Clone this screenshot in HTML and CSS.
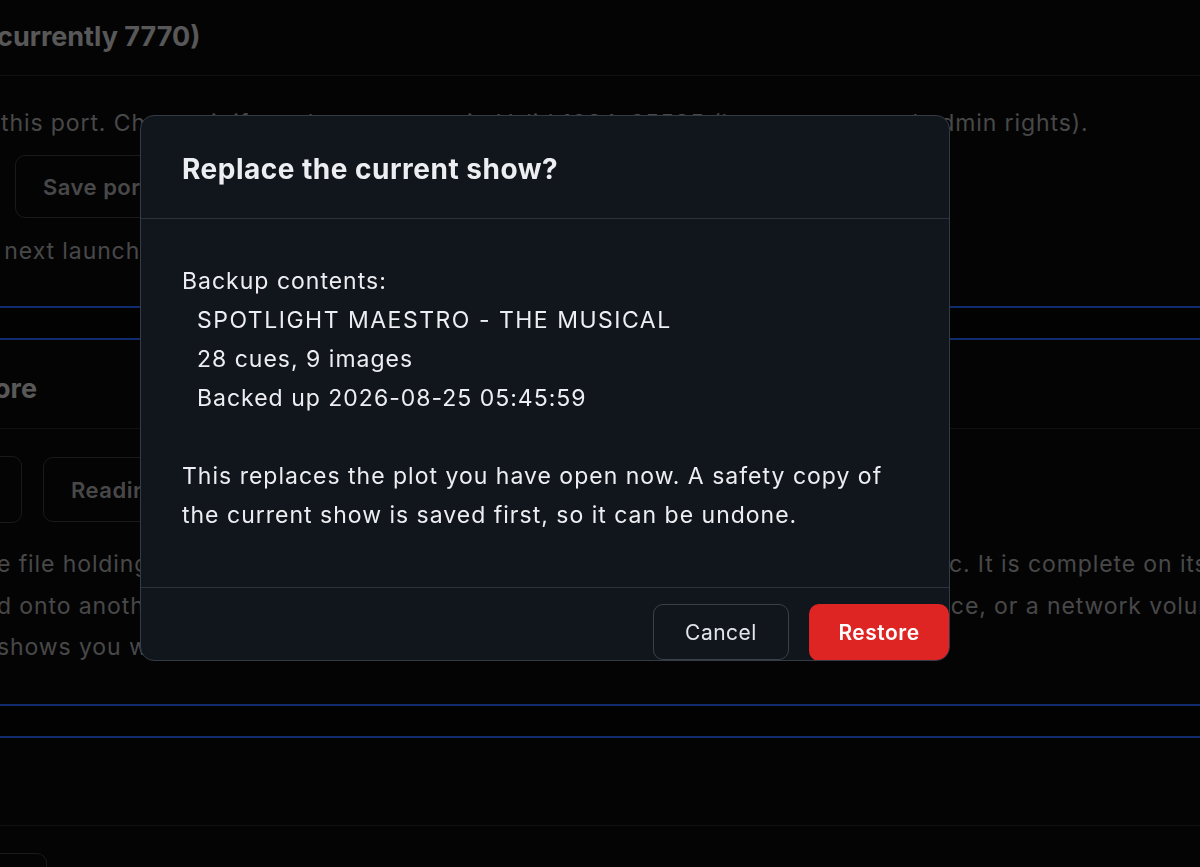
FILE: index.html
```html
<!DOCTYPE html>
<html lang="en">
<head>
<meta charset="utf-8">
<title>Replace the current show?</title>
<link rel="stylesheet" href="styles.css">
</head>
<body>
<main class="page">
  <section class="sec">
    <h2 class="heading">currently 7770)</h2>
    <div class="rule rule-a"></div>
    <p class="txt txt-a">this port. Change it if another app uses it. Valid 1024–65535 (lower ports need admin rights).</p>
    <button class="pbtn pbtn-save">Save port</button>
    <p class="txt txt-b">&nbsp;next launch.</p>
  </section>
  <div class="band band-a"></div>
  <section class="sec">
    <h2 class="heading heading-b">ore</h2>
    <div class="rule rule-b"></div>
    <div class="btnrow">
      <button class="pbtn pbtn-first">Back up</button>
      <button class="pbtn pbtn-read">Reading…</button>
    </div>
    <p class="txt txt-c">e file holding every cue, images and settings in the current show, in one place, etc. It is complete on its own<br>d onto another computer, a USB stick, a shared folder on another big trusted device, or a network volume<br>shows you what it contains before anything is replaced.</p>
  </section>
  <div class="band band-b"></div>
  <div class="rule rule-c"></div>
  <button class="pbtn pbtn-last">Open</button>
</main>

<div class="backdrop">
  <div class="dialog" role="dialog" aria-labelledby="dlg-title">
    <header class="dlg-head">
      <h1 id="dlg-title" class="dlg-title">Replace the current show?</h1>
    </header>
    <div class="dlg-body">
      <div class="line">Backup contents:</div>
      <div class="line indent caps">SPOTLIGHT MAESTRO - THE MUSICAL</div>
      <div class="line indent">28 cues, 9 images</div>
      <div class="line indent">Backed up 2026-08-25 05:45:59</div>
      <div class="line gap">This replaces the plot you have open now. A safety copy of</div>
      <div class="line">the current show is saved first, so it can be undone.</div>
    </div>
    <footer class="dlg-foot">
      <button class="btn btn-cancel">Cancel</button>
      <button class="btn btn-restore">Restore</button>
    </footer>
  </div>
</div>
</body>
</html>
```

FILE: styles.css
```css
html, body {
  margin: 0;
  padding: 0;
  width: 1200px;
  height: 867px;
  overflow: hidden;
  background: #09090d;
}

body {
  font-family: Inter, "Liberation Sans", Arial, sans-serif;
  position: relative;
}

/* ---------- underlying page ---------- */
.page {
  color: #a0a0a0;
  margin-left: -3px;
  white-space: nowrap;
  height: 867px;
  overflow: hidden;
}

.sec { margin: 0; }

.heading {
  margin: 0;
  padding-top: 17px;
  font-size: 27px;
  line-height: 40px;
  font-weight: 700;
  color: #c4c4c4;
}

.heading-b {
  margin-top: 29px;
  padding-top: 0;
  margin-left: -3px;
}

.rule {
  height: 1px;
  background: #26262b;
  width: 1210px;
}
.rule-a { margin-top: 18px; }
.rule-b { margin-top: 19px; }
.rule-c { margin-top: 87px; }

.txt {
  margin: 0;
  font-size: 23px;
  letter-spacing: 0.9px;
  line-height: 40px;
}
.txt-a { margin-top: 27px; margin-left: 4px; }
.txt-b { margin-top: 13px; }
.txt-c { margin-top: 21px; line-height: 41.5px; }

.pbtn {
  display: block;
  font-family: inherit;
  font-size: 22px;
  font-weight: 600;
  letter-spacing: 0.5px;
  color: #a0a0a0;
  background: transparent;
  border: 1px solid #3a3a40;
  border-radius: 10px;
  padding: 0 27px;
}

.pbtn-save {
  margin-top: 12px;
  margin-left: 18px;
  height: 63px;
}

.btnrow {
  display: flex;
  gap: 21px;
  margin-top: 28px;
}
.pbtn-first {
  height: 67px;
  width: 160px;
  margin-left: -135px;
  margin-top: -1px;
}
.pbtn-read {
  height: 65px;
}

.pbtn-last {
  margin-top: 27px;
  margin-left: -110px;
  width: 160px;
  height: 40px;
}

.band {
  height: 30px;
  border-top: 2px solid #2760f5;
  border-bottom: 2px solid #2760f5;
  width: 1210px;
  background: #050508;
}
.band-a { margin-top: 35px; }
.band-b { margin-top: 35px; }

/* ---------- modal ---------- */
.backdrop {
  position: fixed;
  inset: 0;
  background: rgba(0, 0, 0, 0.55);
}

.dialog {
  position: absolute;
  left: 140px;
  top: 115px;
  width: 808px;
  height: 544px;
  background: #11151c;
  border: 1px solid #353b45;
  border-radius: 14px;
  overflow: hidden;
  display: flex;
  flex-direction: column;
  color: #eceef1;
}

.dlg-head {
  height: 103px;
  flex: none;
  border-bottom: 1px solid #2c323b;
  display: flex;
  align-items: center;
  padding: 0 41px;
  box-sizing: border-box;
}

.dlg-title {
  margin: 0;
  font-size: 28px;
  letter-spacing: 0.5px;
  font-weight: 700;
  line-height: 34px;
  padding-top: 4px;
}

.dlg-body {
  flex: none;
  font-size: 23px;
  letter-spacing: 1px;
  line-height: 39px;
  padding: 43px 41px 0;
  height: 369px;
  box-sizing: border-box;
  border-bottom: 1px solid #2c323b;
  white-space: nowrap;
}

.line { height: 39px; }
.indent { padding-left: 15px; }
.gap { margin-top: 39px; }

.caps {
  letter-spacing: 1.5px;
}

.dlg-foot {
  flex: 1;
  display: flex;
  justify-content: flex-end;
  align-items: flex-end;
  gap: 20px;
  padding: 16px 0 0 0;
}

.btn {
  font-family: inherit;
  font-size: 21px;
  letter-spacing: 0.5px;
  border-radius: 10px;
  box-sizing: border-box;
}

.btn-cancel {
  width: 136px;
  height: 56px;
  margin-bottom: 1px;
  background: transparent;
  border: 1px solid #3b414b;
  color: #e2e5ea;
  font-weight: 400;
}

.btn-restore {
  width: 140px;
  height: 57px;
  background: #df2424;
  border: none;
  color: #ffffff;
  font-weight: 600;
}
```
